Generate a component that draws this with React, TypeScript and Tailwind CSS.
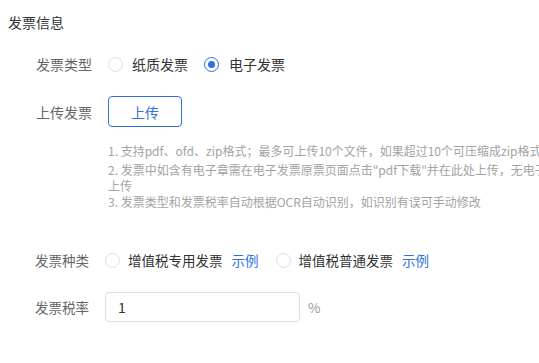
import { useState } from 'react';

const font = { fontFamily: '"Noto Sans CJK SC", "Noto Sans", sans-serif' };

function Radio({ checked }: { checked?: boolean }) {
  return checked ? (
    <span className="flex h-[15px] w-[15px] shrink-0 items-center justify-center rounded-full border border-[#2f6fe4] bg-white">
      <span className="h-[7px] w-[7px] rounded-full bg-[#2f6fe4]" />
    </span>
  ) : (
    <span className="h-[15px] w-[15px] shrink-0 rounded-full border border-[#dcdfe6] bg-white" />
  );
}

export default function App() {
  const [type, setType] = useState<'paper' | 'digital'>('digital');
  const [kind, setKind] = useState<'special' | 'normal' | null>(null);
  const [rate, setRate] = useState('1');

  return (
    <div className="h-screen w-full overflow-hidden bg-white" style={font}>
      <div className="w-[700px] pl-2 pt-3">
        {/* Section title */}
        <div className="h-5 text-[14px] leading-5 text-[#333]">发票信息</div>

        {/* 发票类型 */}
        <div className="mt-[22px] flex h-5 items-center pl-7 text-[14px] leading-5">
          <span className="w-[72px] text-[#666]">发票类型</span>
          <button className="flex items-center" onClick={() => setType('paper')}>
            <Radio checked={type === 'paper'} />
            <span className="ml-[9px] text-[#333]">纸质发票</span>
          </button>
          <button className="ml-4 flex items-center" onClick={() => setType('digital')}>
            <Radio checked={type === 'digital'} />
            <span className="ml-[10px] text-[#333]">电子发票</span>
          </button>
        </div>

        {/* 上传发票 */}
        <div className="mt-[22px] flex items-center pl-7 text-[14px]">
          <span className="w-[72px] leading-5 text-[#666]">上传发票</span>
          <button className="flex h-[31px] w-[74px] items-center justify-center rounded-[4px] border border-[#2f6fe4] leading-5 text-[#2f6fe4]">
            上传
          </button>
        </div>

        {/* Help text */}
        <div className="ml-[100px] mt-[16px] text-[12px] leading-[16px] text-[#a3a3a3]">
          <div className="whitespace-nowrap">
            1. 支持pdf、ofd、zip格式；最多可上传10个文件，如果超过10个可压缩成zip格式上传
          </div>
          <div className="mt-[3px]">
            <div className="whitespace-nowrap">
              2. 发票中如含有电子章需在电子发票原票页面点击"pdf下载"并在此处上传，无电子章的发票可直接截图
            </div>
            <div>上传</div>
          </div>
          <div>3. 发票类型和发票税率自动根据OCR自动识别，如识别有误可手动修改</div>
        </div>

        {/* 发票种类 */}
        <div className="mt-[40px] flex h-5 items-center pl-[27px] text-[13.5px] leading-5">
          <span className="w-[70px] text-[#666]">发票种类</span>
          <button className="flex items-center" onClick={() => setKind('special')}>
            <Radio checked={kind === 'special'} />
            <span className="ml-2 text-[#333]">增值税专用发票</span>
          </button>
          <a className="ml-[9px] cursor-pointer text-[#2f6fe4]">示例</a>
          <button className="ml-[17px] flex items-center" onClick={() => setKind('normal')}>
            <Radio checked={kind === 'normal'} />
            <span className="ml-2 text-[#333]">增值税普通发票</span>
          </button>
          <a className="ml-[9px] cursor-pointer text-[#2f6fe4]">示例</a>
        </div>

        {/* 发票税率 */}
        <div className="mt-[22px] flex items-center pl-[27px] text-[13.5px]">
          <span className="w-[70px] leading-5 text-[#666]">发票税率</span>
          <input
            value={rate}
            onChange={(e) => setRate(e.target.value)}
            className="h-[30px] w-[195px] rounded-[4px] border border-[#dcdfe6] px-3 text-[14px] text-[#333] outline-none"
          />
          <span className="ml-2 leading-5 text-[#999]">%</span>
        </div>
      </div>
    </div>
  );
}
